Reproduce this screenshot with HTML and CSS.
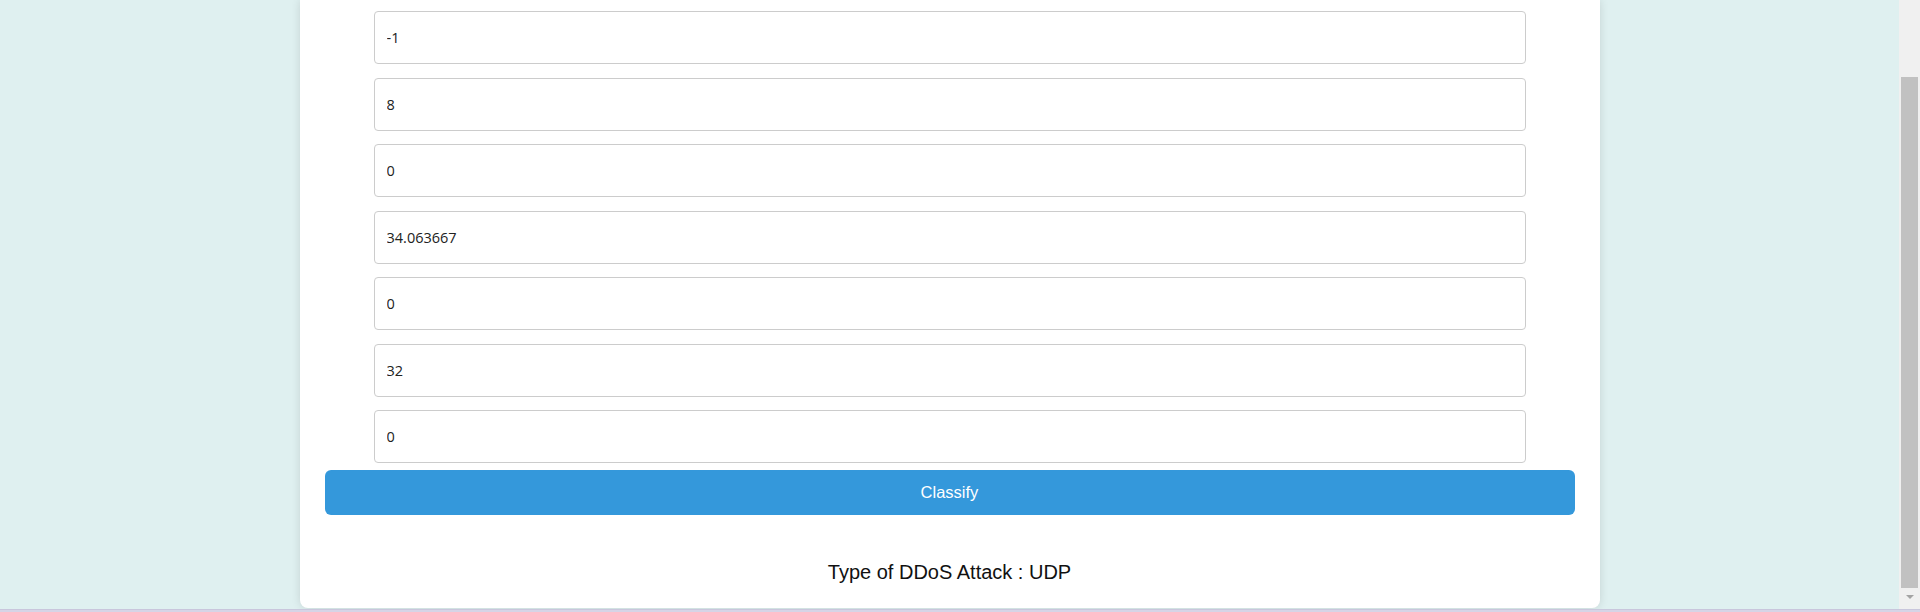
FILE: index.html
```html
<!DOCTYPE html>
<html lang="en">
<head>
<meta charset="utf-8">
<title>DDoS Classifier</title>
<link rel="stylesheet" href="styles.css">
</head>
<body>
<div class="window">
  <div class="viewport">
    <main class="page">
      <section class="card">
        <form class="form">
          <div class="fields">
            <input class="field" type="text" value="-1">
            <input class="field" type="text" value="8">
            <input class="field" type="text" value="0">
            <input class="field" type="text" value="34.063667">
            <input class="field" type="text" value="0">
            <input class="field" type="text" value="32">
            <input class="field" type="text" value="0">
          </div>
          <button class="btn" type="button">Classify</button>
        </form>
        <p class="result">Type of DDoS Attack : UDP</p>
      </section>
    </main>
    <div class="scrollbar">
      <div class="thumb"></div>
      <div class="arrow"></div>
    </div>
  </div>
  <div class="bottom-strip"></div>
</div>
</body>
</html>
```

FILE: styles.css
```css
html, body {
  margin: 0;
  padding: 0;
  height: 612px;
  overflow: hidden;
}

.window {
  display: flex;
  flex-direction: column;
  height: 612px;
}

.viewport {
  display: flex;
  flex-direction: row;
  height: 609px;
}

.page {
  flex: 1;
  background: #dff0f0;
  display: flex;
  justify-content: center;
  align-items: flex-start;
}

.card {
  width: 1300px;
  box-sizing: border-box;
  height: 608px;
  background: #ffffff;
  border-radius: 0 0 8px 8px;
  box-shadow: 0 0 10px rgba(0, 0, 0, 0.12);
  padding: 11px 25px 0 25px;
  display: flex;
  flex-direction: column;
}

.form {
  display: flex;
  flex-direction: column;
  align-items: center;
}

.fields {
  display: flex;
  flex-direction: column;
  gap: 13.5px;
  width: 1152px;
}

.field {
  box-sizing: border-box;
  width: 100%;
  height: 53px;
  margin: 0;
  border: 1px solid #cccccc;
  border-radius: 4px;
  padding: 0 12px;
  font-family: "Open Sans", "Noto Sans", sans-serif;
  font-size: 14.5px;
  color: #222222;
  background: #ffffff;
  outline: none;
}

.btn {
  margin-top: 7px;
  width: 1250px;
  height: 45px;
  border: none;
  border-radius: 6px;
  background: #3498db;
  color: #ffffff;
  font-family: "Liberation Sans", Arial, sans-serif;
  font-size: 16.5px;
  padding: 0;
  cursor: pointer;
}

.result {
  margin: 45px 0 0 0;
  text-align: center;
  font-family: "Liberation Sans", Arial, sans-serif;
  font-size: 20px;
  line-height: 24px;
  color: #111111;
}

.scrollbar {
  width: 21px;
  background: #f0f0f0;
  display: flex;
  flex-direction: column;
  align-items: center;
  padding-top: 77px;
  box-sizing: border-box;
}

.thumb {
  width: 17px;
  height: 511px;
  background: #c1c1c1;
}

.arrow {
  margin-top: 7px;
  width: 0;
  height: 0;
  border-left: 4px solid transparent;
  border-right: 4px solid transparent;
  border-top: 4px solid #a3a3a3;
}

.bottom-strip {
  height: 3px;
  background: #d6d4e6;
  border-top: 1px solid #c9c6dc;
  box-sizing: border-box;
}
```
